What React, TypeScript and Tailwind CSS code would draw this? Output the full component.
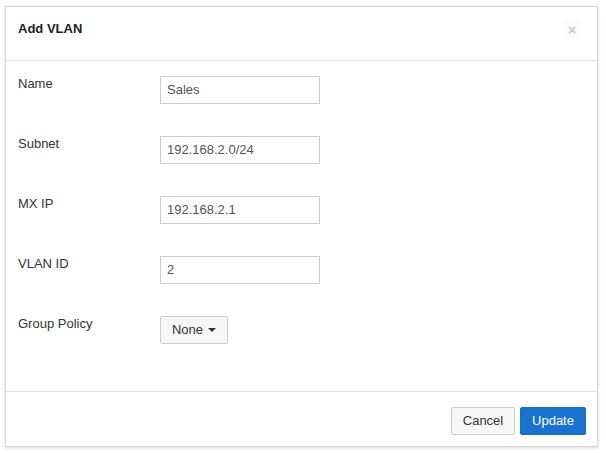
import { useState } from 'react';

const fields = [
  { label: 'Name', value: 'Sales' },
  { label: 'Subnet', value: '192.168.2.0/24' },
  { label: 'MX IP', value: '192.168.2.1' },
  { label: 'VLAN ID', value: '2' },
];

export default function App() {
  const [values, setValues] = useState(fields.map((f) => f.value));

  return (
    <div className="min-h-[453px] bg-white pl-[5px] pt-[6px] font-['Liberation_Sans',Arial,sans-serif] text-[13px] text-[#333]">
      <div className="flex h-[441px] w-[593px] flex-col border border-[#d4d4d4] bg-white shadow-[0_1px_3px_rgba(0,0,0,0.15)]">
        <div className="flex h-[54px] shrink-0 items-start justify-between border-b border-[#e3e3e3] px-[12px] pt-[13px]">
          <h3 className="text-[13px] font-bold leading-[18px] text-[#222]">Add VLAN</h3>
          <button
            type="button"
            className="mr-[5px] mt-[1px] flex h-[18px] w-[16px] items-center justify-center bg-[#fcfcfc] text-[14px] font-bold leading-[16px] text-[#c8c8c8]"
          >
            ×
          </button>
        </div>

        <div className="flex flex-1 flex-col gap-[32px] px-[12px] pt-[15px]">
          {fields.map((field, index) => (
            <div key={field.label} className="flex items-start">
              <label className="w-[142px] pt-[1px] leading-[14px]">{field.label}</label>
              <input
                type="text"
                value={values[index]}
                onChange={(e) => {
                  const next = [...values];
                  next[index] = e.target.value;
                  setValues(next);
                }}
                className="h-[28px] w-[160px] border border-[#ccc] bg-white px-[6px] pb-[2px] text-[13px] text-[#555] outline-none"
              />
            </div>
          ))}
          <div className="flex items-start">
            <label className="w-[142px] pt-[1px] leading-[14px]">Group Policy</label>
            <button
              type="button"
              className="flex h-[28px] w-[68px] items-center justify-center gap-[5px] rounded-[2px] border border-[#ccc] bg-[#f7f7f7] pb-[1px] text-[13px] text-[#333]"
            >
              None
              <span className="mt-[1px] h-0 w-0 border-x-[4px] border-t-[4px] border-x-transparent border-t-[#333]" />
            </button>
          </div>
        </div>

        <div className="flex h-[55px] shrink-0 items-start justify-end gap-[5px] border-t border-[#e3e3e3] pr-[11px] pt-[15px]">
          <button
            type="button"
            className="h-[28px] w-[64px] rounded-[2px] border border-[#ccc] bg-[#f7f7f7] pb-[1px] text-[13px] text-[#333]"
          >
            Cancel
          </button>
          <button
            type="button"
            className="h-[28px] w-[66px] rounded-[2px] border border-[#1a6cc4] bg-[#1a72cf] pb-[1px] text-[13px] text-white"
          >
            Update
          </button>
        </div>
      </div>
    </div>
  );
}
